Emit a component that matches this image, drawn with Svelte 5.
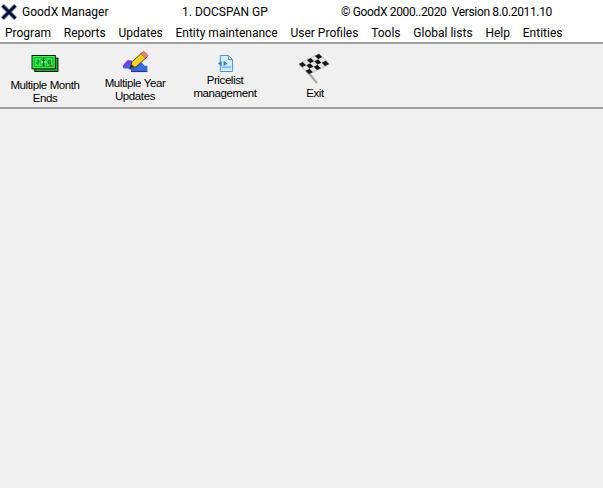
<script lang="ts">
	const menus = [
		'Program',
		'Reports',
		'Updates',
		'Entity maintenance',
		'User Profiles',
		'Tools',
		'Global lists',
		'Help',
		'Entities'
	];

	// exit flag: 5x3 checker on a parallelogram
	const cell = (i: number, j: number) => {
		const x = 0 + i * 4 + j * 3.33;
		const y = 11 - i * 2 + j * 3.33;
		return [x, y];
	};
	const poly = (i: number, j: number) =>
		[cell(i, j), cell(i + 1, j), cell(i + 1, j + 1), cell(i, j + 1)].map((p) => p.join(',')).join(' ');
	const squares = [0, 1, 2].flatMap((j) => [0, 1, 2, 3, 4].map((i) => ({ i, j })));
</script>

<div class="app">
	<header class="title">
		<svg class="logo" width="16" height="16" viewBox="0 0 16 16">
			<path d="M1.5 1.5 L14.5 14.5 M14.5 1.5 L1.5 14.5" stroke="#2a62d8" stroke-width="5" fill="none" opacity="0.45" />
			<path d="M1.5 1.5 L14.5 14.5 M14.5 1.5 L1.5 14.5" stroke="#06102e" stroke-width="3" fill="none" />
		</svg>
		<span class="name">GoodX Manager</span>
		<span class="practice">1. DOCSPAN GP</span>
		<span class="copy">© GoodX 2000..2020&nbsp; Version 8.0.2011.10</span>
	</header>

	<nav class="menu">
		{#each menus as item}
			<span>{item}</span>
		{/each}
	</nav>

	<section class="toolbar">
		<button class="tool month">
			<svg width="28" height="17" viewBox="0 0 30 19">
				<rect x="3.5" y="3.5" width="26" height="15" fill="#18b030" stroke="#000" />
				<rect x="0.5" y="0.5" width="26" height="15" fill="#38f848" stroke="#000" />
				<rect x="3" y="3" width="21" height="10" fill="#30f040" stroke="#10a028" />
				<circle cx="13.5" cy="8" r="4" fill="#70f880" stroke="#10a028" />
				<path d="M13.5 3.5v9M11.5 6h4M11.5 10h4" stroke="#063" stroke-width="1.2" />
				<path d="M6 6h2v2H6v2h2M19 6h2v4h-2z" stroke="#063" fill="none" />
				<rect x="20" y="11" width="3" height="1.5" fill="#d02020" />
			</svg>
			<span>Multiple Month<br />Ends</span>
		</button>
		<button class="tool year">
			<svg width="27" height="22" viewBox="0 0 28 24">
				<path d="M0 17 L6 11 H19 L24 16 H27 V21 H9 L6 19 H1z" fill="#2f6cf0" />
				<path d="M0 16 L5 10 H10 L6 17z" fill="#7a3cf0" />
				<path d="M9 21 H27 V23 H9z" fill="#2038a0" />
				<path d="M8 19 L10 12 L21 2 L26 7 L15 17z" fill="#f8d020" stroke="#302000" stroke-width="0.8" />
				<path d="M20 3 L22 1 Q23 0 24 1 L27 4 Q28 5 27 6 L25 8z" fill="#f08080" stroke="#803030" stroke-width="0.6" />
				<path d="M8 19 L9.5 14.5 L12.5 17z" fill="#402010" />
			</svg>
			<span>Multiple Year<br />Updates</span>
		</button>
		<button class="tool pricelist">
			<svg width="17" height="17" viewBox="0 0 18 18">
				<path d="M3.5 .5 H12 L16.5 5 V17.5 H3.5z" fill="#d8ecfb" stroke="#3d8fd8" />
				<path d="M12 .5 V5 H16.5z" fill="#fff" stroke="#3d8fd8" />
				<rect x="5" y="12" width="10" height="2" fill="#7cbcec" />
				<path d="M5 6 L1 9 L5 12z M7 6 L11 9 L7 12z" fill="#2f7fd0" />
			</svg>
			<span>Pricelist<br />management</span>
		</button>
		<button class="tool exit">
			<svg width="32" height="31" viewBox="0 0 32 31">
				<path d="M7 17 L18 30" stroke="#a8a8a8" stroke-width="2.2" />
				<path d="M0 11 L20 1 L30 11 L10 21z" fill="#ddd" stroke="#b4b4b4" stroke-width="1.4" />
				{#each squares as { i, j }}
					<polygon points={poly(i, j)} fill={(i + j) % 2 ? '#e4e4e4' : '#151515'} />
				{/each}
			</svg>
			<span>Exit</span>
		</button>
	</section>

	<main class="content"></main>
</div>

<style>
	:global(body) {
		background: #f0f0f0;
	}

	.app {
		height: 488px;
		display: flex;
		flex-direction: column;
		background: #f0f0f0;
		overflow: hidden;
	}

	.title {
		height: 24px;
		background: #fff;
		display: flex;
		align-items: center;
		font: 12px Roboto, sans-serif;
		color: #000;
		white-space: nowrap;
	}

	.logo {
		margin-left: 1px;
		width: 16px;
		flex: none;
	}

	.name {
		margin-left: 5px;
		width: 160px;
	}

	.practice {
		width: 159px;
	}

	.copy {
		letter-spacing: -0.35px;
	}

	.menu {
		height: 18px;
		background: #fff;
		display: flex;
		align-items: center;
		gap: 12.8px;
		padding-left: 5px;
		font: 12px Roboto, sans-serif;
		color: #000;
		white-space: nowrap;
	}

	.toolbar {
		height: 63px;
		flex: none;
		display: flex;
		border-top: 2px solid #a0a0a0;
		border-bottom: 2px solid #a0a0a0;
	}

	.tool {
		width: 90px;
		flex: none;
		display: flex;
		flex-direction: column;
		align-items: center;
		padding: 0;
		border: 0;
		background: none;
		font: 11.5px/13px "Liberation Sans", sans-serif;
		letter-spacing: -0.4px;
		color: #000;
		text-align: center;
	}

	.month {
		padding-top: 11px;
	}

	.month svg {
		margin-bottom: 7px;
	}

	.year {
		padding-top: 7px;
	}

	.year svg {
		margin-bottom: 4px;
	}

	.pricelist {
		padding-top: 11px;
	}

	.pricelist svg {
		margin-bottom: 2px;
	}

	.exit {
		padding-top: 9px;
	}

	.exit svg {
		margin-bottom: 3px;
	}

	.content {
		flex: 1;
	}
</style>
